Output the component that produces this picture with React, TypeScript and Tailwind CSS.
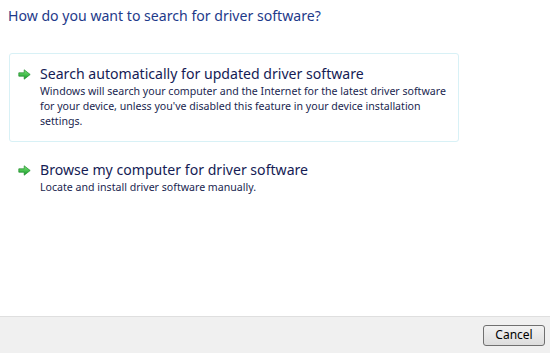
import React from "react";

function Arrow() {
  return (
    <svg width="13" height="11" viewBox="0 0 13 11" className="shrink-0">
      <defs>
        <linearGradient id="g" x1="0" y1="0" x2="0" y2="1">
          <stop offset="0" stopColor="#7fe87a" />
          <stop offset="1" stopColor="#139a27" />
        </linearGradient>
      </defs>
      <path d="M0.8 3.8 H6.2 V0.8 L12.2 5.5 L6.2 10.2 V7.2 H0.8 Z" fill="url(#g)" stroke="#1c8a2a" strokeWidth="0.7" strokeLinejoin="round" />
    </svg>
  );
}

export default function App() {
  const font = { fontFamily: '"Noto Sans", "Open Sans", sans-serif' };
  return (
    <div className="w-[550px] h-[353px] bg-white flex flex-col" style={font}>
      <div className="flex-1 flex flex-col">
        <div className="pl-[8px] pt-[6px] text-[14.1px] text-[#1e3a8a] leading-[20px]">
          How do you want to search for driver software?
        </div>
        <div className="mt-[27px] ml-[9px] w-[450px] h-[89px] border border-[#d8f1f6] rounded-[3px] flex pt-[10px] pl-[8px]">
          <div className="pt-[5px] pr-[9px]">
            <Arrow />
          </div>
          <div className="flex flex-col">
            <div className="text-[14.1px] text-[#151c55] leading-[20px]">
              Search automatically for updated driver software
            </div>
            <div className="text-[10.6px] text-[#1a1f50] leading-[15px] w-[416px]">
              Windows will search your computer and the Internet for the latest driver software for your device, unless you've disabled this feature in your device installation settings.
            </div>
          </div>
        </div>
        <div className="mt-[16px] ml-[9px] flex pt-[2px] pl-[9px]">
          <div className="pt-[5px] pr-[9px]">
            <Arrow />
          </div>
          <div className="flex flex-col">
            <div className="text-[14.1px] text-[#151c55] leading-[20px]">
              Browse my computer for driver software
            </div>
            <div className="text-[10.6px] text-[#1a1f50] leading-[15px]">
              Locate and install driver software manually.
            </div>
          </div>
        </div>
      </div>
      <div className="h-[37px] bg-[#f0f0f0] border-t border-[#dfdfdf] flex items-center justify-end pr-[5px]">
        <button className="w-[62px] h-[21px] border border-[#707070] rounded-[3px] bg-gradient-to-b from-[#f2f2f2] to-[#dddddd] text-[12px] text-black leading-none">
          Cancel
        </button>
      </div>
    </div>
  );
}
